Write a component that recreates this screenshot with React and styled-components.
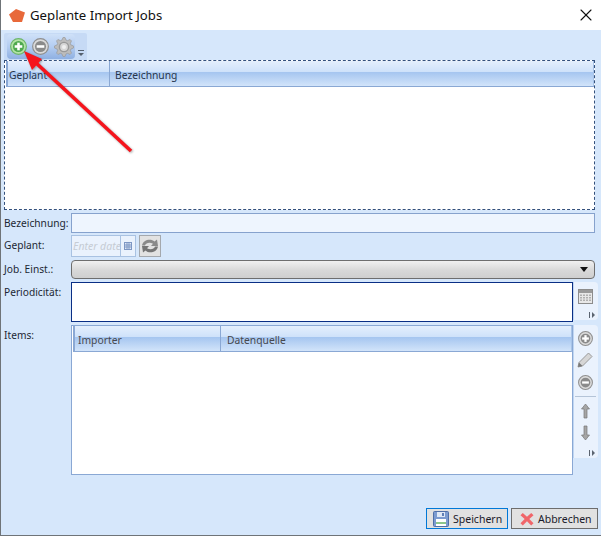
import React from "react";
import styled, { createGlobalStyle } from "styled-components";
import { X } from "lucide-react";

const Global = createGlobalStyle`
  html, body {
    margin: 0;
    padding: 0;
    background: #d6e7fb;
  }
  body {
    font-family: "Noto Sans", "Open Sans", sans-serif;
    font-size: 10.5px;
    color: #1e2a3a;
  }
`;

const Window = styled.div`
  position: relative;
  width: 601px;
  height: 536px;
  box-sizing: border-box;
  border-left: 1px solid #6f7478;
  border-bottom: 1px solid #6f7478;
  background: #d6e7fb;
  display: flex;
  flex-direction: column;
  overflow: hidden;
`;

const TitleBar = styled.div`
  height: 30px;
  flex: none;
  background: #fff;
  display: flex;
  align-items: center;
  padding: 0 5px 0 8px;
  gap: 5px;
  font-size: 13.2px;
  color: #111;
`;

const TitleText = styled.span`
  flex: 1;
`;

const Body = styled.div`
  flex: 1;
  display: flex;
  flex-direction: column;
  padding: 3px 3px 0 3px;
`;

const ToolStrip = styled.div`
  width: 83px;
  height: 27px;
  box-sizing: border-box;
  background: #c6daf5;
  border-radius: 2px 2px 0 0;
  display: flex;
  padding: 1px 0 0 3px;
`;

const ToolGroup = styled.div`
  width: 68px;
  height: 25px;
  background: linear-gradient(#cfe1f8, #b4cdf1 50%, #8fb0e2);
  border-radius: 4px;
  display: flex;
  align-items: center;
  gap: 5px;
  padding-left: 3px;
  box-sizing: border-box;
`;

const Overflow = styled.div`
  flex: 1;
  display: flex;
  align-items: flex-end;
  justify-content: center;
  padding-bottom: 3px;
`;

const TopGrid = styled.div`
  height: 150px;
  width: 591px;
  box-sizing: border-box;
  border: 1px dashed #33507c;
  background: #fff;
  padding-left: 1px;
`;

const HeaderRow = styled.div`
  height: 26px;
  display: flex;
  box-sizing: border-box;
  background: linear-gradient(#e4effd 0, #cfe2fa 42%, #a6c6f0 46%, #d2e4fa 100%);
  border-bottom: 1px solid #8aa8d4;
  border-right: 1px solid #a8c4e8;
  border-left: 2px solid #8aa8d4;
  color: ${(p) => p.$color || "#26364d"};
`;

const HeaderCell = styled.div`
  width: ${(p) => p.$width}px;
  flex: ${(p) => (p.$width ? "none" : 1)};
  box-sizing: border-box;
  display: flex;
  align-items: flex-end;
  padding: 0 0 4px ${(p) => p.$pad}px;
  border-right: ${(p) => (p.$width ? "1px solid #8aa8d4" : "none")};
  font-size: 10.3px;
`;

const Form = styled.div`
  display: grid;
  grid-template-columns: 66px 1fr;
  column-gap: 1px;
  margin-top: 3px;
`;

const Label = styled.div`
  height: ${(p) => p.$height || 20}px;
  font-size: 10.2px;
  color: #1d2733;
  white-space: nowrap;
  padding-top: ${(p) => p.$top || 0}px;
  box-sizing: border-box;
  margin-top: ${(p) => p.$gap || 0}px;
`;

const TextInput = styled.div`
  height: 20px;
  width: 524px;
  box-sizing: border-box;
  background: #eef5fe;
  border: 1px solid #86a2cd;
`;

const DateRow = styled.div`
  display: flex;
  gap: 3px;
  margin-top: 2px;
  height: 22px;
`;

const DateInput = styled.div`
  width: 65px;
  height: 22px;
  box-sizing: border-box;
  display: flex;
  border: 1px solid #a9c2e2;
  background: #eaf2fd;
`;

const DateText = styled.span`
  flex: 1;
  font-style: italic;
  font-size: 10.5px;
  line-height: 21px;
  padding-left: 1px;
  color: #c6ccd4;
  overflow: hidden;
  white-space: nowrap;
`;

const DateButton = styled.div`
  width: 14px;
  flex: none;
  border-left: 1px solid #a9c2e2;
  display: flex;
  align-items: center;
  justify-content: center;
`;

const RefreshButton = styled.div`
  width: 22px;
  height: 22px;
  box-sizing: border-box;
  border: 1px solid #a4a8ad;
  background: #e2e2e2;
  display: flex;
  align-items: center;
  justify-content: center;
`;

const Combo = styled.div`
  height: 19px;
  width: 524px;
  margin-top: 3px;
  box-sizing: border-box;
  border: 1px solid #6e6e6e;
  border-radius: 4px;
  background: linear-gradient(#f0f0f0, #d8d8d8 55%, #cfcfcf);
  display: flex;
  align-items: center;
  justify-content: flex-end;
  padding-right: 6px;
`;

const ComboArrow = styled.div`
  width: 0;
  height: 0;
  border-left: 4px solid transparent;
  border-right: 4px solid transparent;
  border-top: 5px solid #111;
`;

const WithSide = styled.div`
  display: flex;
  margin-top: ${(p) => p.$gap}px;
`;

const Memo = styled.div`
  width: 502px;
  height: 40px;
  box-sizing: border-box;
  background: #fff;
  border: 1px solid #0a2f85;
`;

const SideBar = styled.div`
  width: 25px;
  height: ${(p) => p.$height}px;
  box-sizing: border-box;
  background: #eaf2fd;
  border-left: 1px solid #c0d6f2;
  border-radius: 0 4px 4px 0;
  display: flex;
  flex-direction: column;
  align-items: center;
  padding: ${(p) => p.$top}px 2px 0 0;
  position: relative;
`;

const SideGap = styled.div`
  height: ${(p) => p.$size}px;
  flex: none;
`;

const Divider = styled.div`
  width: 21px;
  height: 1px;
  background: #b4c4d8;
  flex: none;
  margin: 6px 0;
`;

const Grip = styled.div`
  position: absolute;
  right: 2px;
  bottom: 1px;
  line-height: 0;
`;

const ItemsGrid = styled.div`
  width: 502px;
  height: 150px;
  box-sizing: border-box;
  background: #fff;
  border: 1px solid #8aa8d4;
  padding-left: 1px;
`;

const Footer = styled.div`
  display: flex;
  justify-content: flex-end;
  gap: 3px;
  margin-top: 33px;
`;

const ActionButton = styled.div`
  height: 21px;
  width: ${(p) => p.$width}px;
  box-sizing: border-box;
  background: #e1e1e1;
  border: 1px solid ${(p) => (p.$primary ? "#0078d7" : "#6d6d6d")};
  display: flex;
  align-items: center;
  padding-left: ${(p) => p.$pad}px;
  gap: 4px;
  font-size: 10.5px;
  color: #1a1a2a;
`;

const ArrowLayer = styled.svg`
  position: absolute;
  left: -1px;
  top: 0;
  pointer-events: none;
  filter: drop-shadow(1px 1px 1px rgba(60, 60, 60, 0.45));
`;

const Logo = () => (
  <svg width="16" height="13" viewBox="0 0 16 13">
    <polygon points="0,5.5 7,0 16,3.5 13,13 4,13" fill="#e8693a" />
  </svg>
);

const RoundIcon = ({ plus, color = "#8a8a8a", light = "#dadada", edge = "#8f8f8f", size = 15 }) => (
  <svg width={size} height={size} viewBox="0 0 16 16">
    <circle cx="8" cy="8" r="7.4" fill={light} stroke={edge} strokeWidth="1.1" />
    <circle cx="8" cy="8" r="5.2" fill={color} />
    <rect x="4.4" y="6.8" width="7.2" height="2.4" fill="#fff" />
    {plus && <rect x="6.8" y="4.4" width="2.4" height="7.2" fill="#fff" />}
  </svg>
);

const gearPoints = Array.from({ length: 32 }, (_, i) => {
  const step = i % 4;
  const radius = step === 0 || step === 1 ? 9.6 : 7.2;
  const angle = ((i - 0.5) * Math.PI * 2) / 32;
  return `${(10 + radius * Math.cos(angle)).toFixed(2)},${(10 + radius * Math.sin(angle)).toFixed(2)}`;
}).join(" ");

const Gear = () => (
  <svg width="20" height="20" viewBox="0 0 20 20">
    <polygon points={gearPoints} fill="#bcbcbc" stroke="#989898" strokeWidth="0.7" />
    <circle cx="10" cy="10" r="4.6" fill="#d6d6d6" stroke="#989898" strokeWidth="1.4" />
    <circle cx="10" cy="10" r="2" fill="#efefef" />
  </svg>
);

const OverflowMark = () => (
  <svg width="8" height="8" viewBox="0 0 8 8">
    <rect x="1" y="1" width="6" height="1" fill="#55606e" />
    <polygon points="1,4 7,4 4,7" fill="#55606e" />
  </svg>
);

const GripMark = () => (
  <svg width="8" height="8" viewBox="0 0 8 8">
    <rect x="1" y="1" width="1" height="6" fill="#5b6470" />
    <polygon points="4,1 7,4 4,7" fill="#5b6470" />
  </svg>
);

const CalendarSmall = () => (
  <svg width="8" height="8" viewBox="0 0 8 8">
    <rect x="0.5" y="0.5" width="7" height="7" fill="#dfe8f6" stroke="#7d97c4" />
    <path d="M3 0.5V7.5M5 0.5V7.5M0.5 3H7.5M0.5 5H7.5" stroke="#7d97c4" strokeWidth="1" />
  </svg>
);

const CalendarBig = () => (
  <svg width="15" height="15" viewBox="0 0 15 15">
    <rect x="0.5" y="0.5" width="14" height="14" fill="#e8e8e8" stroke="#8c8c8c" />
    <rect x="1" y="1" width="13" height="3" fill="#9a9a9a" />
    {[2, 5, 8, 11].map((x) =>
      [5.5, 8, 10.5].map((y) => (
        <rect key={`${x}-${y}`} x={x} y={y} width="2" height="1.5" fill="#b0b0b0" />
      ))
    )}
  </svg>
);

const Refresh = () => (
  <svg width="18" height="16" viewBox="0 0 18 16">
    <path d="M1 7.5 C2 1.5 10 0 13.5 3.5 L16 1.5 L17 8 L10 8 L12 5.8 C9 4 5 4.5 4 7.5 Z" fill="#8a8a8a" />
    <path d="M17 8.5 C16 14.5 8 16 4.5 12.5 L2 14.5 L1 8 L8 8 L6 10.2 C9 12 13 11.5 14 8.5 Z" fill="#757575" />
  </svg>
);

const Pencil = () => (
  <svg width="16" height="16" viewBox="0 0 16 16">
    <path d="M11.5 1 L15 4.5 L5.5 14 L1 15 L2 10.5 Z" fill="#d6d6d6" stroke="#9a9a9a" />
    <path d="M2 10.5 L5.5 14 L1 15 Z" fill="#777" />
  </svg>
);

const ArrowIcon = ({ down }) => (
  <svg width="9" height="16" viewBox="0 0 9 16">
    <polygon
      points={down ? "3,1 6,1 6,10 8.5,10 4.5,15 0.5,10 3,10" : "3,15 6,15 6,6 8.5,6 4.5,1 0.5,6 3,6"}
      fill="#a5a5a5"
      stroke="#777"
      strokeWidth="0.7"
    />
  </svg>
);

const Floppy = () => (
  <svg width="16" height="16" viewBox="0 0 16 16">
    <rect x="0.5" y="0.5" width="15" height="15" rx="1" fill="#7c9bd0" stroke="#4f6fa8" />
    <rect x="4" y="1" width="8" height="5" fill="#dfe8f6" />
    <rect x="9" y="2" width="2" height="3" fill="#5f7fb6" />
    <rect x="3" y="8" width="10" height="7" fill="#fff" />
    <rect x="3" y="11" width="10" height="2" fill="#8cc68c" />
  </svg>
);

const Cancel = () => (
  <svg width="14" height="14" viewBox="0 0 15 15">
    <path
      d="M3 1 L7.5 5 L12 1 L14.5 3.5 L10 7.5 L14.5 12 L12 14.5 L7.5 10 L3 14.5 L0.5 12 L5 7.5 L0.5 3.5 Z"
      fill="#f0666a"
    />
  </svg>
);

export default function App() {
  return (
    <>
      <Global />
      <Window>
        <TitleBar>
          <Logo />
          <TitleText>Geplante Import Jobs</TitleText>
          <X size={20} strokeWidth={1.3} color="#111" />
        </TitleBar>
        <Body>
          <ToolStrip>
            <ToolGroup>
              <RoundIcon plus size={17} color="#4ea84e" light="#b4e4a6" edge="#6db56a" />
              <RoundIcon size={17} />
              <Gear />
            </ToolGroup>
            <Overflow>
              <OverflowMark />
            </Overflow>
          </ToolStrip>
          <TopGrid>
            <HeaderRow>
              <HeaderCell $width={102} $pad={1}>Geplant</HeaderCell>
              <HeaderCell $pad={5}>Bezeichnung</HeaderCell>
            </HeaderRow>
          </TopGrid>
          <Form>
            <Label $top={3}>Bezeichnung:</Label>
            <TextInput />
            <Label $top={5} $height={24}>Geplant:</Label>
            <DateRow>
              <DateInput>
                <DateText>Enter date</DateText>
                <DateButton>
                  <CalendarSmall />
                </DateButton>
              </DateInput>
              <RefreshButton>
                <Refresh />
              </RefreshButton>
            </DateRow>
            <Label $top={5} $height={22}>Job. Einst.:</Label>
            <Combo>
              <ComboArrow />
            </Combo>
            <Label $top={3} $gap={3} $height={40}>Periodicität:</Label>
            <WithSide $gap={3}>
              <Memo />
              <SideBar $height={38} $top={7}>
                <CalendarBig />
                <Grip>
                  <GripMark />
                </Grip>
              </SideBar>
            </WithSide>
            <Label $top={3} $gap={3} $height={150}>Items:</Label>
            <WithSide $gap={3}>
              <ItemsGrid>
                <HeaderRow $color="#46484f">
                  <HeaderCell $width={146} $pad={3}>Importer</HeaderCell>
                  <HeaderCell $pad={6}>Datenquelle</HeaderCell>
                </HeaderRow>
              </ItemsGrid>
              <SideBar $height={133} $top={6}>
                <RoundIcon plus />
                <SideGap $size={6} />
                <Pencil />
                <SideGap $size={7} />
                <RoundIcon />
                <Divider />
                <ArrowIcon />
                <SideGap $size={6} />
                <ArrowIcon down />
                <Grip>
                  <GripMark />
                </Grip>
              </SideBar>
            </WithSide>
          </Form>
          <Footer>
            <ActionButton $primary $width={82} $pad={6}>
              <Floppy />
              Speichern
            </ActionButton>
            <ActionButton $width={87} $pad={8}>
              <Cancel />
              Abbrechen
            </ActionButton>
          </Footer>
        </Body>
        <ArrowLayer width="601" height="536">
          <line x1="131" y1="151" x2="35" y2="62" stroke="#f5141c" strokeWidth="3.6" />
          <polygon points="24,51 42,59 32,70" fill="#f5141c" />
        </ArrowLayer>
      </Window>
    </>
  );
}
